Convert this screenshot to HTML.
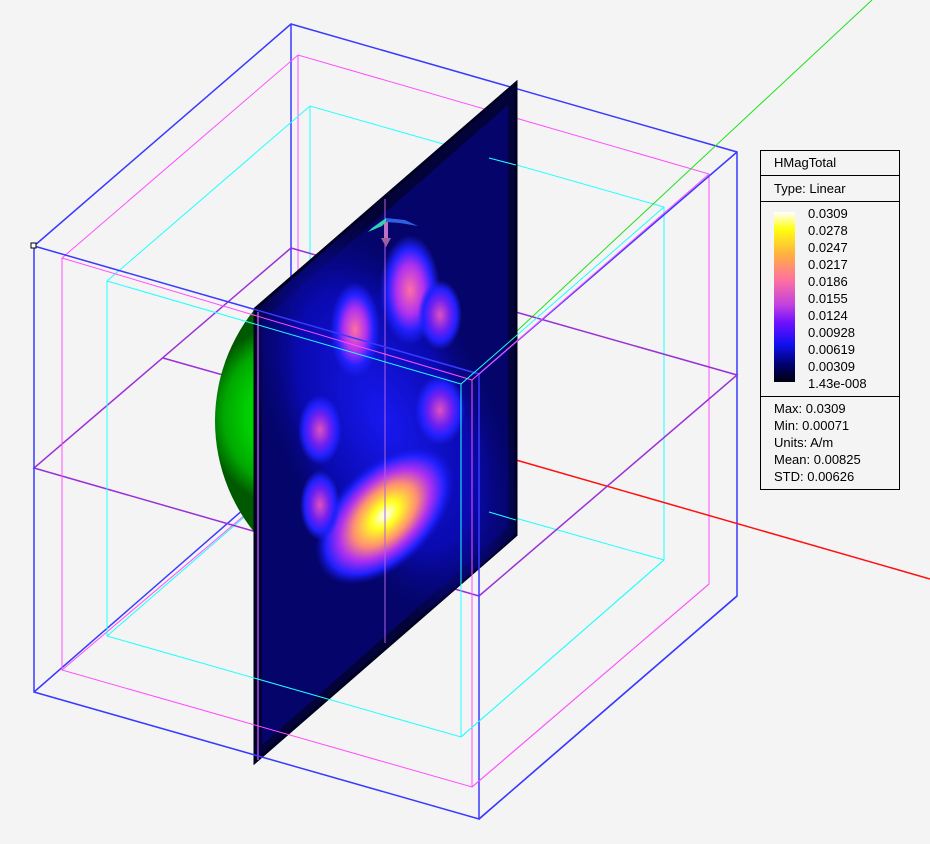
<!DOCTYPE html>
<html><head><meta charset="utf-8"><style>
html,body{margin:0;padding:0;background:#f4f4f4;}
body{width:930px;height:844px;overflow:hidden;position:relative;font-family:"Liberation Sans",sans-serif;}
svg{position:absolute;left:0;top:0;}
.leg{position:absolute;left:760px;top:150px;width:138px;height:338px;border:1px solid #000;background:#f4f4f4;font-size:13px;color:#000;}
.leg .r{border-bottom:1px solid #000;padding-left:13px;box-sizing:border-box;}
.bar{position:absolute;left:13px;top:62px;width:21px;height:170px;background:linear-gradient(to bottom,#ffffff 0%,#ffff10 10%,#ffb040 25%,#ff70a0 40%,#c040e0 55%,#7010ff 65%,#1010f0 78%,#00006a 90%,#000010 100%);}
.lab{position:absolute;left:47px;top:54px;line-height:17px;}
</style></head><body>
<svg width="930" height="844" viewBox="0 0 930 844">
<defs>
<radialGradient id="b" cx="50%" cy="50%" r="50%"><stop offset="0" stop-color="#ffffff"/><stop offset=".2" stop-color="#ffff20"/><stop offset=".45" stop-color="#ff9070"/><stop offset=".65" stop-color="#b030f0"/><stop offset=".85" stop-color="#2020ff"/><stop offset="1" stop-color="#1010d0" stop-opacity="0"/></radialGradient>
<radialGradient id="p" cx="50%" cy="50%" r="50%"><stop offset="0" stop-color="#ff70a0"/><stop offset=".45" stop-color="#b030f0"/><stop offset=".75" stop-color="#2020ff"/><stop offset="1" stop-color="#2020f0" stop-opacity="0"/></radialGradient>
<radialGradient id="m" cx="50%" cy="50%" r="50%"><stop offset="0" stop-color="#e050c0"/><stop offset=".45" stop-color="#7020f0"/><stop offset=".75" stop-color="#2020ff"/><stop offset="1" stop-color="#2020f0" stop-opacity="0"/></radialGradient>
<radialGradient id="bl" cx="50%" cy="50%" r="50%"><stop offset="0" stop-color="#1818f0"/><stop offset=".6" stop-color="#0a0ab0"/><stop offset="1" stop-color="#04045a" stop-opacity="0"/></radialGradient>
<radialGradient id="sph" gradientUnits="userSpaceOnUse" cx="300" cy="415" r="95"><stop offset="0" stop-color="#00e000"/><stop offset=".55" stop-color="#00d000"/><stop offset=".8" stop-color="#00a800"/><stop offset="1" stop-color="#005800"/></radialGradient>
<clipPath id="pc"><polygon points="258,309 516,83 516,535 258,762"/></clipPath>
<clipPath id="sc"><rect x="0" y="0" width="258" height="844"/></clipPath>
</defs>
<g fill="none" stroke-width="1">
<g stroke="#3a3aff" stroke-width="1.5">
<polyline points="34,246 291,24 737,152 737,596 479,819"/>
<line x1="291" y1="24" x2="291" y2="468"/>
<line x1="34" y1="692" x2="291" y2="468"/>
</g>
<g stroke="#ff50ff"><polyline points="62,258 298,55 709,174 709,584 472,787"/><line x1="298" y1="55" x2="298" y2="470"/><line x1="62" y1="670" x2="298" y2="470"/></g>
<g stroke="#20ffff"><polyline points="107,281 310,106 664,207 664,560 461,737"/><line x1="310" y1="106" x2="310" y2="460"/><line x1="107" y1="636" x2="310" y2="460"/><line x1="310" y1="460" x2="664" y2="560"/></g>
<line x1="474" y1="371" x2="872" y2="0" stroke="#20e020"/>
<line x1="516" y1="460" x2="930" y2="579" stroke="#ff1010" stroke-width="1.5"/>
<g stroke="#9a30d8" stroke-width="1.5"><polygon points="34,468 479,596 737,375 291,248"/><line x1="163" y1="358" x2="516" y2="458"/></g>
</g>
<circle cx="392" cy="421" r="177" fill="url(#sph)" clip-path="url(#sc)"/>
<polygon points="255,309 516,83 516,535 255,762" fill="#03033a" stroke="#000020" stroke-width="3"/>
<g clip-path="url(#pc)">
<polygon points="262,320 508,105 508,528 262,745" fill="#04046a"/>
<ellipse cx="385" cy="420" rx="120" ry="230" fill="url(#bl)" transform="rotate(-25 385 420)"/>
<ellipse cx="385" cy="515" rx="50" ry="85" fill="url(#b)" transform="rotate(45 385 515)"/>
<ellipse cx="410" cy="290" rx="30" ry="55" fill="url(#p)"/>
<ellipse cx="355" cy="330" rx="25" ry="48" fill="url(#p)"/>
<ellipse cx="440" cy="315" rx="22" ry="35" fill="url(#m)"/>
<ellipse cx="440" cy="410" rx="25" ry="35" fill="url(#m)"/>
<ellipse cx="320" cy="430" rx="22" ry="35" fill="url(#m)"/>
<ellipse cx="320" cy="505" rx="20" ry="35" fill="url(#m)"/>
</g>
<g fill="none">
<line x1="385" y1="199" x2="385" y2="643" stroke="#b060e0"/>
<line x1="258" y1="312" x2="258" y2="760" stroke="#b050e0" stroke-width="1.5"/>
<g stroke="#3a3aff" stroke-width="1.5"><polyline points="34,246 479,374 479,819 34,692 34,246"/><line x1="479" y1="374" x2="737" y2="152"/><line x1="479" y1="819" x2="737" y2="596"/></g>
<g stroke="#ff50ff"><polyline points="62,258 472,380 472,787 62,670 62,258"/><line x1="472" y1="380" x2="709" y2="174"/><line x1="472" y1="787" x2="709" y2="584"/></g>
<g stroke="#20ffff"><polyline points="107,281 461,384 461,737 107,636 107,281"/><line x1="461" y1="384" x2="664" y2="207"/><line x1="461" y1="737" x2="664" y2="560"/><line x1="489" y1="158" x2="516" y2="165"/><line x1="489" y1="512" x2="516" y2="520"/></g>
</g>
<rect x="31" y="243" width="5" height="5" fill="#fff" stroke="#000"/>
<line x1="386" y1="222" x2="386" y2="240" stroke="#c070c0" stroke-width="4"/>
<polygon points="381,238 391,238 386,247" fill="#a060a0"/>
<polygon points="386,218 405,220 418,226 400,223 386,222" fill="#3060e0"/>
<polygon points="386,218 372,228 368,232 382,226 386,222" fill="#30d0b0"/>
</svg>
<div class="leg">
<div class="r" style="height:25px;line-height:24px;">HMagTotal</div>
<div class="r" style="height:26px;line-height:25px;">Type: Linear</div>
<div class="r" style="height:195px;position:relative;"><div class="bar" style="top:10px"></div><div class="lab" style="top:3px">0.0309<br>0.0278<br>0.0247<br>0.0217<br>0.0186<br>0.0155<br>0.0124<br>0.00928<br>0.00619<br>0.00309<br>1.43e-008</div></div>
<div style="padding-left:13px;line-height:17px;padding-top:3px;">Max: 0.0309<br>Min: 0.00071<br>Units: A/m<br>Mean: 0.00825<br>STD: 0.00626</div>
</div>
</body></html>
